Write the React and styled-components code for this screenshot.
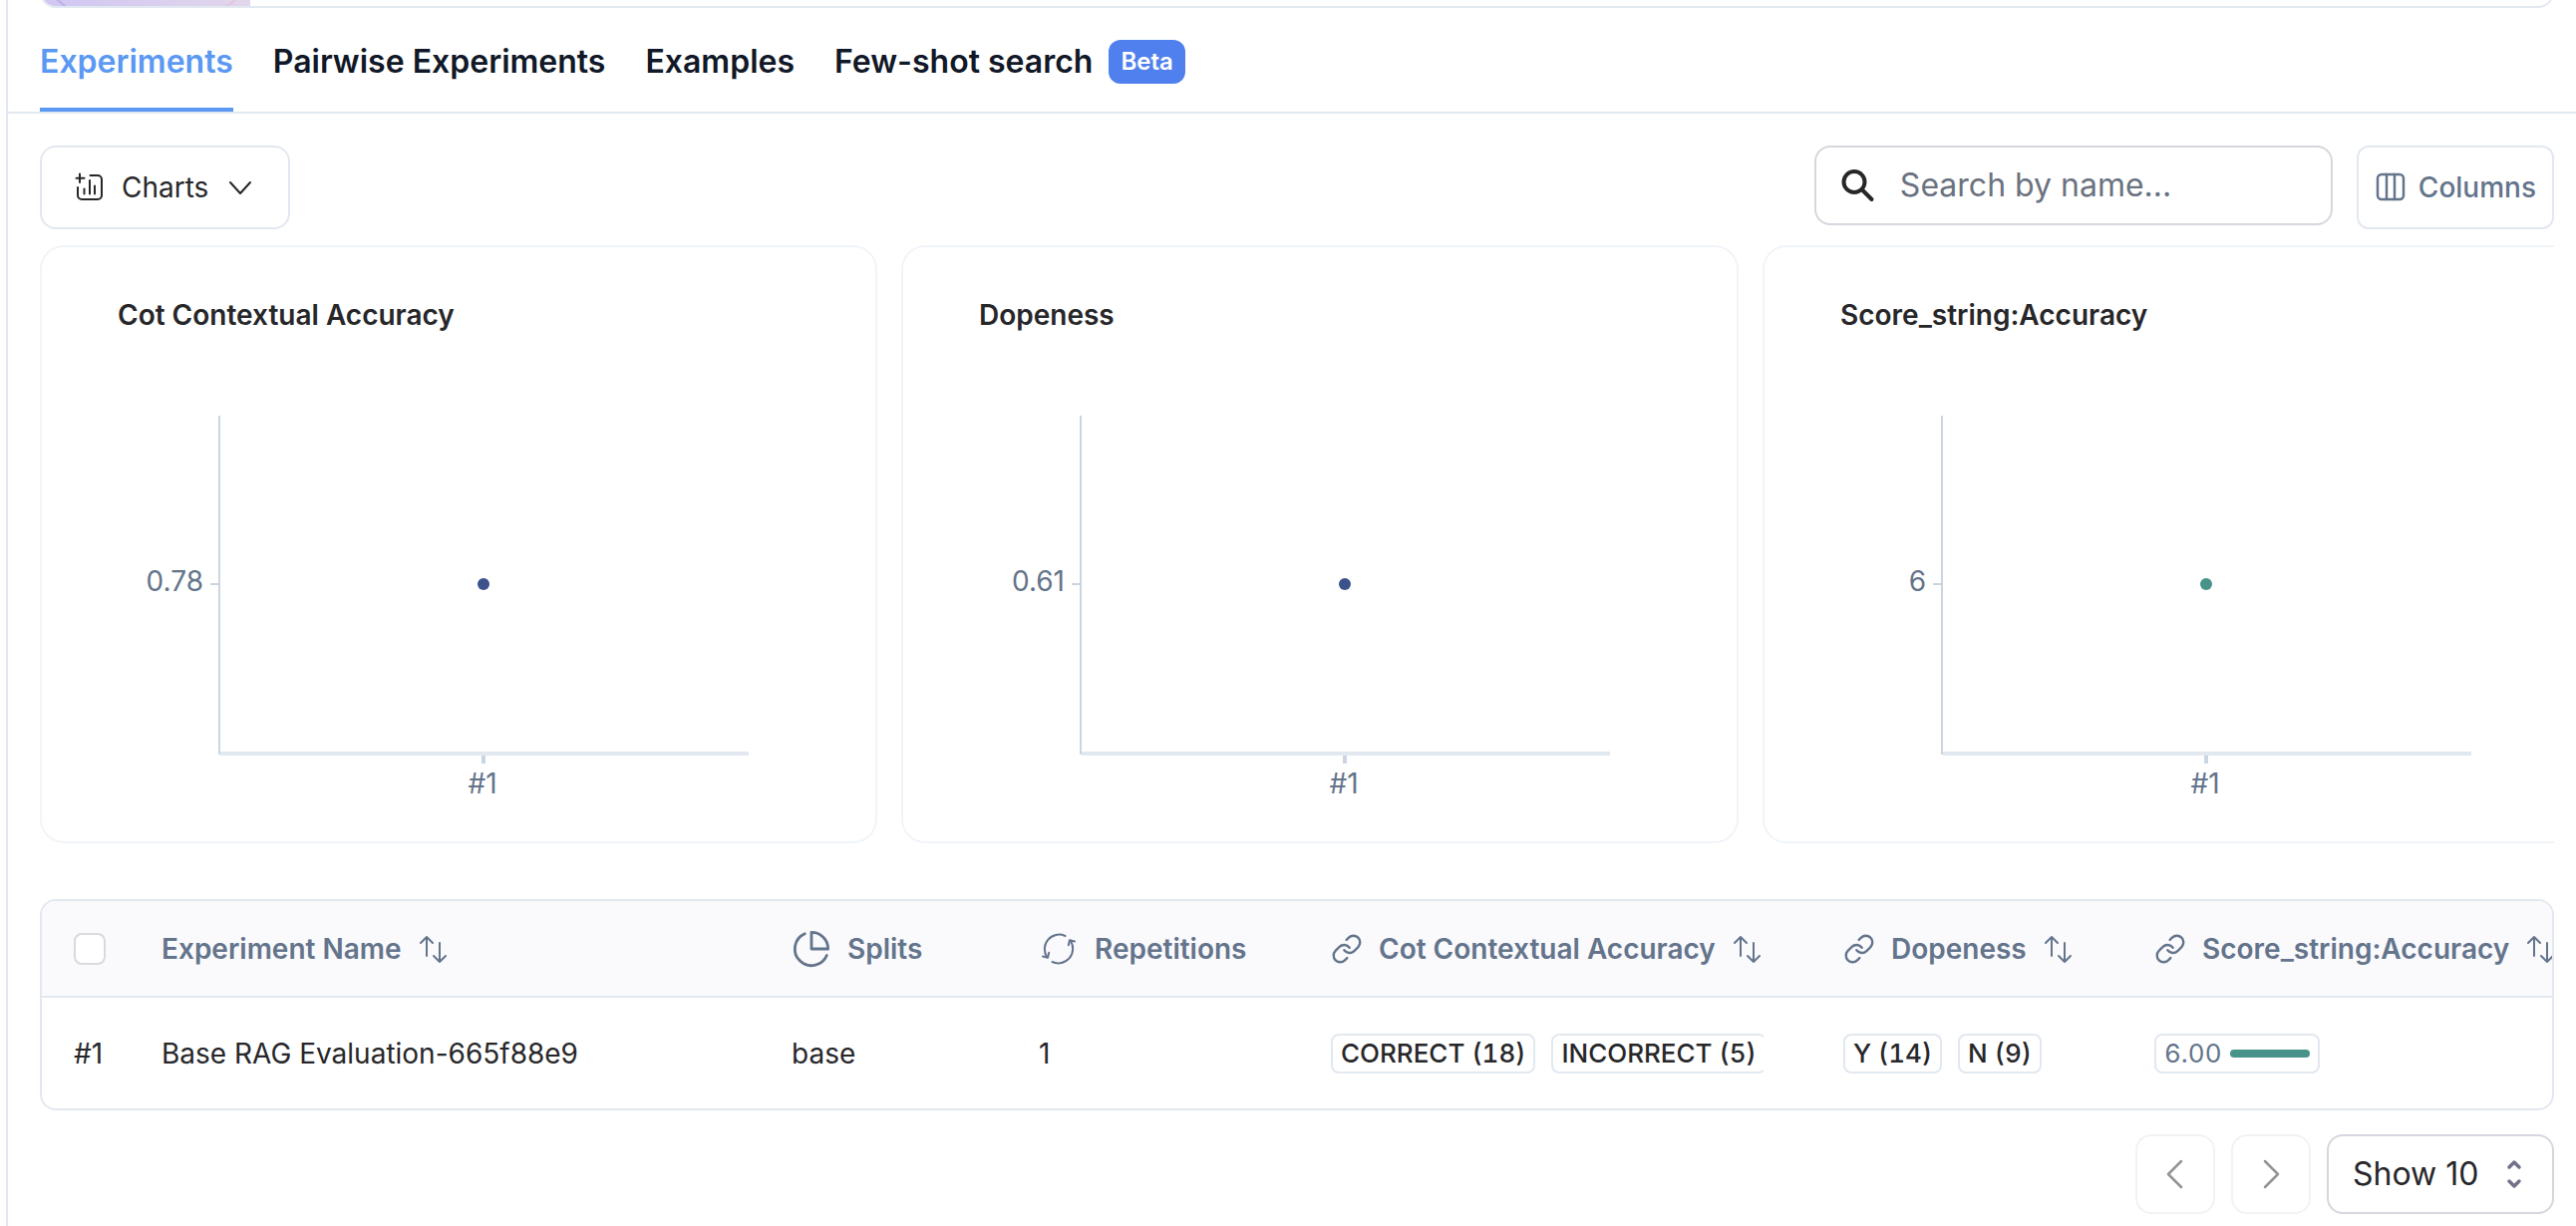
import React from "react";
import styled, { createGlobalStyle } from "styled-components";

const color = {
  line: "#e2e8f0",
  faint: "#f1f5f9",
  control: "#d6d6de",
  tick: "#cbd5e1",
  text: "#27272a",
  heading: "#111827",
  muted: "#64748b",
  blue: "#5b98f2",
  badge: "#4f80ee",
  teal: "#47938a",
  navy: "#3b528b",
};

const GlobalStyle = createGlobalStyle`
  *, *::before, *::after { box-sizing: border-box; }
  body {
    margin: 0;
    background: #fff;
    color: ${color.text};
    font-family: Inter, "Liberation Sans", sans-serif;
    font-size: 28px;
    line-height: 40px;
  }
  button, input, select { font: inherit; color: inherit; margin: 0; }
`;

const Page = styled.main`
  min-height: 100vh;
  margin-left: 6px;
  border-left: 2px solid ${color.line};
  overflow: hidden;
`;

const Banner = styled.div`
  display: flex;
  align-items: flex-end;
  height: 8px;
  padding: 0 22px 0 32px;
  overflow: hidden;
`;

const BannerCard = styled.div`
  flex: 1;
  height: 80px;
  flex-shrink: 0;
  border: 2px solid ${color.line};
  border-radius: 16px;
  overflow: hidden;
`;

const BannerArt = styled.svg`
  display: block;
  width: 209px;
  height: 76px;
`;

const Tabs = styled.nav`
  display: flex;
  gap: 40px;
  padding: 0 22px 0 32px;
  border-bottom: 2px solid ${color.line};
`;

const Tab = styled.a`
  display: flex;
  align-items: center;
  gap: 16px;
  padding: 30px 0 22px;
  border-bottom: 4px solid ${(p) => (p.$active ? color.blue : "transparent")};
  color: ${(p) => (p.$active ? color.blue : color.heading)};
  font-size: 32px;
  line-height: 48px;
  font-weight: 600;
  text-decoration: none;
`;

const Badge = styled.span`
  padding: 2px 12px;
  border-radius: 12px;
  background: ${color.badge};
  color: #fff;
  font-size: 24px;
  line-height: 40px;
  font-weight: 600;
`;

const Content = styled.div`
  padding: 32px 22px 8px 32px;
`;

const Toolbar = styled.div`
  display: flex;
  align-items: flex-start;
  gap: 24px;
`;

const ToolButton = styled.button`
  display: flex;
  align-items: center;
  gap: ${(p) => (p.$muted ? "12px" : "16px")};
  height: 84px;
  padding: 0 ${(p) => (p.$muted ? "16px" : "32px")};
  border: 2px solid ${color.line};
  border-radius: ${(p) => (p.$muted ? "12px" : "16px")};
  background: #fff;
  color: ${(p) => (p.$muted ? color.muted : color.text)};
  font-weight: ${(p) => (p.$muted ? 500 : 400)};
`;

const SearchBox = styled.label`
  display: flex;
  align-items: center;
  gap: 24px;
  width: 520px;
  height: 80px;
  margin-left: auto;
  padding: 0 24px;
  border: 2px solid ${color.control};
  border-radius: 16px;
`;

const SearchInput = styled.input`
  flex: 1;
  min-width: 0;
  padding: 0;
  border: 0;
  outline: 0;
  background: transparent;
  font-size: 32px;
  line-height: 48px;
  &::placeholder { color: #6b7280; opacity: 1; }
`;

const ChartStrip = styled.section`
  display: flex;
  gap: 24px;
  margin-top: 16px;
  overflow-x: auto;
  scrollbar-width: none;
`;

const ChartCard = styled.article`
  flex: 0 0 840px;
  height: 600px;
  border: 2px solid ${color.faint};
  border-radius: 24px;
`;

const ChartTitle = styled.h2`
  margin: 0;
  padding: 48px 76px 0;
  font-size: 28px;
  line-height: 40px;
  font-weight: 600;
`;

const Plot = styled.svg`
  display: block;
  width: 100%;
  height: 508px;
  text { font-size: 28px; fill: ${color.muted}; }
`;

const TableFrame = styled.section`
  margin-top: 56px;
  border: 2px solid ${color.line};
  border-radius: 16px;
  overflow-x: auto;
  scrollbar-width: none;
`;

const Table = styled.table`
  width: 100%;
  min-width: 2563px;
  table-layout: fixed;
  border-collapse: separate;
  border-spacing: 0;
`;

const Col = styled.col`
  width: ${(p) => p.$width}px;
`;

const HeadCell = styled.th`
  height: 97px;
  padding: 0 0 0 ${(p) => (p.$first ? "32px" : "40px")};
  border-bottom: 2px solid ${color.line};
  background: #fafafd;
  color: ${color.muted};
  font-weight: 600;
  text-align: left;
  white-space: nowrap;
`;

const HeadContent = styled.div`
  display: flex;
  align-items: center;
  gap: 16px;
`;

const SortButton = styled.button`
  display: flex;
  padding: 0;
  border: 0;
  background: none;
`;

const Cell = styled.td`
  height: 111px;
  padding: 0 ${(p) => (p.$first ? "0 0 32px" : "40px")};
  white-space: nowrap;
`;

const Checkbox = styled.input`
  display: block;
  appearance: none;
  width: 32px;
  height: 32px;
  border: 2px solid #d9d9de;
  border-radius: 8px;
  background: #fff;
`;

const ChipRow = styled.div`
  display: flex;
  gap: 16px;
  overflow: hidden;
`;

const Chip = styled.span`
  display: flex;
  flex: none;
  align-items: center;
  gap: 8px;
  height: 40px;
  padding: 0 8px;
  border: 2px solid ${color.line};
  border-radius: 8px;
  color: ${(p) => (p.$muted ? color.muted : color.text)};
  font-size: 26px;
  font-variant-numeric: tabular-nums;
  line-height: 36px;
  font-weight: ${(p) => (p.$muted ? 400 : 500)};
`;

const Meter = styled.span`
  width: 80px;
  height: 8px;
  border-radius: 4px;
  background: ${color.teal};
`;

const Pager = styled.footer`
  display: flex;
  justify-content: flex-end;
  gap: 16px;
  margin-top: 24px;
`;

const PageButton = styled.button`
  display: flex;
  align-items: center;
  justify-content: center;
  width: 80px;
  height: 80px;
  border: 2px solid #f2f2f7;
  border-radius: 16px;
  background: #fff;
  color: #939393;
`;

const SelectBox = styled.div`
  display: grid;
  align-items: center;
  width: 228px;
  height: 80px;
  border: 2px solid ${color.control};
  border-radius: 16px;
  color: ${color.text};
  > * { grid-area: 1 / 1; }
  > svg { justify-self: end; margin-right: 30px; pointer-events: none; }
`;

const Select = styled.select`
  appearance: none;
  width: 100%;
  height: 100%;
  padding: 0 24px;
  border: 0;
  background: transparent;
  font-size: 32px;
  line-height: 48px;
`;

function Icon({ size = 32, box = 32, stroke = 2, children, ...rest }) {
  return (
    <svg
      width={size}
      height={size}
      viewBox={`0 0 ${box} ${box}`}
      fill="none"
      stroke="currentColor"
      strokeWidth={stroke}
      strokeLinecap="round"
      strokeLinejoin="round"
      aria-hidden="true"
      {...rest}
    >
      {children}
    </svg>
  );
}

const ChartsIcon = () => (
  <Icon>
    <path d="M6 2.500v8.500M2.500 6.700h8M16.500 4H24a4 4 0 0 1 4 4v16a4 4 0 0 1-4 4H8a4 4 0 0 1-4-4v-8M10.500 17.500v5M16 9v13.500M21 14.500v8" />
  </Icon>
);
const ChevronDown = () => (
  <Icon><path d="M6 11l10 11 10-11" /></Icon>
);
const SearchIcon = () => (
  <Icon size={36} box={36} stroke={4}>
    <circle cx="14" cy="14.500" r="10.500" />
    <path d="M22 22.500L31.500 32" />
  </Icon>
);
const ColumnsIcon = () => (
  <Icon stroke={2.5}>
    <rect x="3" y="3" width="26" height="25" rx="4" />
    <path d="M12 3v25M20 3v25" />
  </Icon>
);
const SortIcon = () => (
  <Icon>
    <path d="M9 23V4M3 10l6-6 6 6M22 10v19M16 23l6 6 6-6" />
  </Icon>
);
const SplitsIcon = () => (
  <Icon size={40} box={24} stroke={1.7}>
    <path d="M21.210 15.890A10 10 0 1 1 8 2.830" />
    <path d="M22 12A10 10 0 0 0 12 2v10z" />
  </Icon>
);
const RepeatIcon = () => (
  <Icon size={40} box={40}>
    <path d="M8.500 28.500A14.500 14.500 0 0 1 26.500 7M31.500 11.500A14.500 14.500 0 0 1 13.500 33" />
    <path d="M4 27.500l5 1.200 1.200-5M36 12.500l-5-1.200-1.200 5" />
  </Icon>
);
const LinkIcon = () => (
  <Icon size={32} box={24} stroke={1.800}>
    <path d="M10 13a5 5 0 0 0 7.540.54l3-3a5 5 0 0 0-7.070-7.070l-1.720 1.710" />
    <path d="M14 11a5 5 0 0 0-7.540-.54l-3 3a5 5 0 0 0 7.070 7.070l1.710-1.710" />
  </Icon>
);
const ChevronLeft = () => (
  <Icon stroke={2.5}><path d="M22 3L9 16l13 13" /></Icon>
);
const ChevronRight = () => (
  <Icon stroke={2.5}><path d="M10 3l13 13-13 13" /></Icon>
);
const UpDownIcon = () => (
  <svg width="16" height="32" viewBox="0 0 16 32" fill="none" stroke="#71718a" strokeWidth="3.5" strokeLinecap="round" strokeLinejoin="round" aria-hidden="true">
    <path d="M3 9l5-5 5 5M3 23l5 5 5-5" />
  </svg>
);

const charts = [
  { title: "Cot Contextual Accuracy", value: "0.78", fill: color.navy },
  { title: "Dopeness", value: "0.61", fill: color.navy },
  { title: "Score_string:Accuracy", value: "6", fill: color.teal },
];

function Chart({ title, value, fill }) {
  return (
    <ChartCard>
      <ChartTitle>{title}</ChartTitle>
      <Plot viewBox="0 0 836 508" role="img" aria-label={`${title}: ${value}`}>
        <path d="M178 81v340M169 250h9" stroke={color.tick} strokeWidth="2" />
        <path d="M179 420h530" stroke={color.line} strokeWidth="4" />
        <path d="M443 422v8" stroke={color.tick} strokeWidth="4" />
        <circle cx="443" cy="250" r="6" fill={fill} />
        <text x="162" y="257" textAnchor="end">{value}</text>
        <text x="442" y="460" textAnchor="middle">#1</text>
      </Plot>
    </ChartCard>
  );
}

function Head({ icon, label, sortable }) {
  return (
    <HeadCell scope="col">
      <HeadContent>
        {icon}
        {label}
        {sortable && (
          <SortButton type="button" aria-label={`Sort by ${label}`}>
            <SortIcon />
          </SortButton>
        )}
      </HeadContent>
    </HeadCell>
  );
}

export default function App() {
  return (
    <>
      <GlobalStyle />
      <Page>
        <Banner>
          <BannerCard>
            <BannerArt viewBox="0 0 209 76" aria-hidden="true">
              <defs>
                <linearGradient id="art">
                  <stop offset="0" stopColor="#d0c6f2" />
                  <stop offset="1" stopColor="#e2d6ec" />
                </linearGradient>
              </defs>
              <path d="M0 0h209v76H0z" fill="url(#art)" />
              <path d="M14 68q6 6 12 10" stroke="#bcb0e6" strokeWidth="2" fill="none" />
              <path d="M196 68q-6 6-14 10" stroke="#e2c4e0" strokeWidth="2" fill="none" />
            </BannerArt>
          </BannerCard>
        </Banner>

        <Tabs aria-label="Dataset sections">
          <Tab href="#experiments" $active aria-current="page">Experiments</Tab>
          <Tab href="#pairwise">Pairwise Experiments</Tab>
          <Tab href="#examples">Examples</Tab>
          <Tab href="#few-shot">
            Few-shot search
            <Badge>Beta</Badge>
          </Tab>
        </Tabs>

        <Content>
          <Toolbar>
            <ToolButton type="button">
              <ChartsIcon />
              Charts
              <ChevronDown />
            </ToolButton>
            <SearchBox>
              <SearchIcon />
              <SearchInput type="text" placeholder="Search by name..." aria-label="Search by name" />
            </SearchBox>
            <ToolButton type="button" $muted>
              <ColumnsIcon />
              Columns
            </ToolButton>
          </Toolbar>

          <ChartStrip>
            {charts.map((c) => <Chart key={c.title} {...c} />)}
          </ChartStrip>

          <TableFrame>
            <Table>
              <colgroup>
                {[80, 632, 248, 293, 514, 312, 484].map((w, i) => <Col key={i} $width={w} />)}
              </colgroup>
              <thead>
                <tr>
                  <HeadCell scope="col" $first>
                    <Checkbox type="checkbox" aria-label="Select all experiments" />
                  </HeadCell>
                  <Head label="Experiment Name" sortable />
                  <Head icon={<SplitsIcon />} label="Splits" />
                  <Head icon={<RepeatIcon />} label="Repetitions" />
                  <Head icon={<LinkIcon />} label="Cot Contextual Accuracy" sortable />
                  <Head icon={<LinkIcon />} label="Dopeness" sortable />
                  <Head icon={<LinkIcon />} label="Score_string:Accuracy" sortable />
                </tr>
              </thead>
              <tbody>
                <tr>
                  <Cell $first>#1</Cell>
                  <Cell>Base RAG Evaluation-665f88e9</Cell>
                  <Cell>base</Cell>
                  <Cell>1</Cell>
                  <Cell>
                    <ChipRow>
                      <Chip>CORRECT (18)</Chip>
                      <Chip>INCORRECT (5)</Chip>
                    </ChipRow>
                  </Cell>
                  <Cell>
                    <ChipRow>
                      <Chip>Y (14)</Chip>
                      <Chip>N (9)</Chip>
                    </ChipRow>
                  </Cell>
                  <Cell>
                    <ChipRow>
                      <Chip $muted>
                        6.00
                        <Meter />
                      </Chip>
                    </ChipRow>
                  </Cell>
                </tr>
              </tbody>
            </Table>
          </TableFrame>

          <Pager>
            <PageButton type="button" aria-label="Previous page"><ChevronLeft /></PageButton>
            <PageButton type="button" aria-label="Next page"><ChevronRight /></PageButton>
            <SelectBox>
              <Select aria-label="Rows per page" defaultValue="10">
                <option value="10">Show 10</option>
                <option value="20">Show 20</option>
                <option value="50">Show 50</option>
              </Select>
              <UpDownIcon />
            </SelectBox>
          </Pager>
        </Content>
      </Page>
    </>
  );
}
